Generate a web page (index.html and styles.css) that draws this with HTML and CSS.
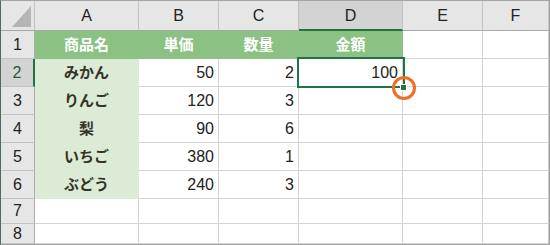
FILE: index.html
```html
<!DOCTYPE html>
<html lang="ja">
<head>
  <meta charset="UTF-8" />
  <meta name="viewport" content="width=device-width, initial-scale=1" />
  <title>商品一覧</title>
  <link rel="stylesheet" href="styles.css">
</head>
<body>
  <div class="sheet">
    <!-- column headers -->
    <div class="hd corner">
      <svg width="20" height="21" viewBox="0 0 20 21"><polygon points="19,0 19,21 0,21" fill="#b5b5b5"/></svg>
    </div>
    <div class="hd">A</div>
    <div class="hd">B</div>
    <div class="hd">C</div>
    <div class="hd on">D</div>
    <div class="hd">E</div>
    <div class="hd last">F</div>

    <!-- row 1 -->
    <div class="rh">1</div>
    <div class="c head">商品名</div>
    <div class="c head">単価</div>
    <div class="c head">数量</div>
    <div class="c head">金額</div>
    <div class="c"></div>
    <div class="c last"></div>

    <!-- row 2 -->
    <div class="rh on">2</div>
    <div class="c name">みかん</div>
    <div class="c num">50</div>
    <div class="c num">2</div>
    <div class="c num sel">100<span class="handle"></span><span class="ring"></span></div>
    <div class="c"></div>
    <div class="c last"></div>

    <!-- row 3 -->
    <div class="rh">3</div>
    <div class="c name">りんご</div>
    <div class="c num">120</div>
    <div class="c num">3</div>
    <div class="c"></div>
    <div class="c"></div>
    <div class="c last"></div>

    <!-- row 4 -->
    <div class="rh">4</div>
    <div class="c name">梨</div>
    <div class="c num">90</div>
    <div class="c num">6</div>
    <div class="c"></div>
    <div class="c"></div>
    <div class="c last"></div>

    <!-- row 5 -->
    <div class="rh">5</div>
    <div class="c name">いちご</div>
    <div class="c num">380</div>
    <div class="c num">1</div>
    <div class="c"></div>
    <div class="c"></div>
    <div class="c last"></div>

    <!-- row 6 -->
    <div class="rh">6</div>
    <div class="c name">ぶどう</div>
    <div class="c num">240</div>
    <div class="c num">3</div>
    <div class="c"></div>
    <div class="c"></div>
    <div class="c last"></div>

    <!-- rows 7, 8 -->
    <div class="rh">7</div>
    <div class="c"></div><div class="c"></div><div class="c"></div>
    <div class="c"></div><div class="c"></div><div class="c last"></div>

    <div class="rh">8</div>
    <div class="c"></div><div class="c"></div><div class="c"></div>
    <div class="c"></div><div class="c"></div><div class="c last"></div>
  </div>
</body>
</html>
```

FILE: styles.css
```css
body {
  margin: 0;
  background: #fff;
}
.sheet {
  width: 550px;
  height: 245px;
  box-sizing: border-box;
  border: 1px solid #a3a3a3;
  border-left-color: #4d6e5e;
  display: grid;
  grid-template-columns: 34px 104px 80px 80px 104px 80px 66px;
  grid-template-rows: 30px repeat(6, 28px) 25px 20px;
  overflow: hidden;
  font-family: "Liberation Sans", Arial, sans-serif;
  color: #222;
}
.sheet > div {
  box-sizing: border-box;
  border-right: 1px solid #d4d4d4;
  border-bottom: 1px solid #d4d4d4;
  display: flex;
  align-items: center;
  min-width: 0;
}

/* headers */
.hd {
  background: #e6e6e6;
  justify-content: center;
  font-size: 16px;
  padding-top: 1px;
}
.sheet > .hd {
  border-right-color: #c2c2c2;
  border-bottom-color: #a8a8a8;
}
.hd.corner {
  align-items: flex-end;
  justify-content: flex-end;
  padding: 0 2px 3px 0;
}
.hd.on {
  background: #d3d3d3;
}
.sheet > .hd.on {
  border-bottom: 2px solid #217346;
}
.rh {
  background: #e6e6e6;
  justify-content: center;
  font-size: 16px;
}
.sheet > .rh {
  border-right-color: #ababab;
  border-bottom-color: #c2c2c2;
}
.rh.on {
  background: #d3d3d3;
  color: #1f5c3b;
}
.sheet > .rh.on {
  border-right: 2px solid #217346;
}

/* cells */
.c {
  font-size: 16px;
  padding: 0 4px;
}
.sheet > .last {
  border-right-color: #c8c8c8;
}
.num {
  justify-content: flex-end;
}
.head, .name {
  justify-content: center;
  font-family: "Noto Sans CJK JP", sans-serif;
  font-weight: bold;
  font-size: 15px;
  padding-bottom: 3px;
}
.head {
  background: #8bc183;
  color: #fff;
}
.sheet > .head {
  border-color: #8bc183;
}
.name {
  background: #dbebd5;
  color: #33332a;
}
.sheet > .name {
  border-color: #dbebd5;
}

/* active cell */
.sel {
  position: relative;
}
.sel::after {
  content: "";
  position: absolute;
  top: -2px;
  left: -2px;
  right: -3px;
  bottom: -2px;
  border: 2px solid #217346;
  z-index: 2;
}
.handle {
  position: absolute;
  right: -5px;
  bottom: -5px;
  width: 5px;
  height: 5px;
  background: #217346;
  border: 1px solid #fff;
  z-index: 3;
}
.ring {
  position: absolute;
  right: -14px;
  bottom: -14px;
  width: 18px;
  height: 18px;
  border: 3px solid #ee6f25;
  border-radius: 50%;
  z-index: 4;
}
```
